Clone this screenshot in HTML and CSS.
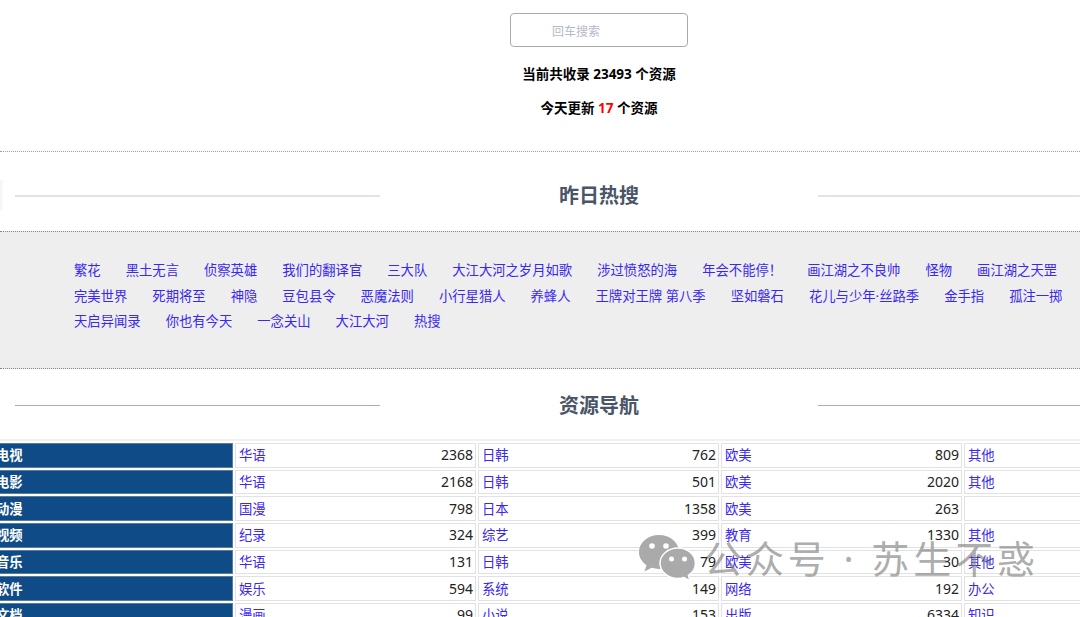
FILE: index.html
```html
<!DOCTYPE html>
<html lang="zh-CN">
<head>
<meta charset="utf-8">
<title>资源导航</title>
<link rel="stylesheet" href="styles.css">
</head>
<body>
<div class="page">
  <section class="top">
    <input class="search" type="text" placeholder="回车搜索">
    <p class="stat">当前共收录 23493 个资源</p>
    <p class="stat">今天更新 <span class="red">17</span> 个资源</p>
  </section>
  <div class="heading hot-heading"><i></i><h2>昨日热搜</h2><i></i></div>
  <nav class="hot">
    <a href="#">繁花</a><a href="#">黑土无言</a><a href="#">侦察英雄</a><a href="#">我们的翻译官</a><a href="#">三大队</a><a href="#">大江大河之岁月如歌</a><a href="#">涉过愤怒的海</a><a href="#">年会不能停！</a><a href="#">画江湖之不良帅</a><a href="#">怪物</a><a href="#">画江湖之天罡</a>
    <a href="#">完美世界</a><a href="#">死期将至</a><a href="#">神隐</a><a href="#">豆包县令</a><a href="#">恶魔法则</a><a href="#">小行星猎人</a><a href="#">养蜂人</a><a href="#">王牌对王牌 第八季</a><a href="#">坚如磐石</a><a href="#">花儿与少年·丝路季</a><a href="#">金手指</a><a href="#">孤注一掷</a>
    <a href="#">天启异闻录</a><a href="#">你也有今天</a><a href="#">一念关山</a><a href="#">大江大河</a><a href="#">热搜</a>
  </nav>
  <div class="heading nav-heading"><i></i><h2>资源导航</h2><i></i></div>
  <table class="res">
    <tr><th>电视</th><td><a href="#">华语</a><b>2368</b></td><td><a href="#">日韩</a><b>762</b></td><td><a href="#">欧美</a><b>809</b></td><td><a href="#">其他</a></td></tr>
    <tr><th>电影</th><td><a href="#">华语</a><b>2168</b></td><td><a href="#">日韩</a><b>501</b></td><td><a href="#">欧美</a><b>2020</b></td><td><a href="#">其他</a></td></tr>
    <tr><th>动漫</th><td><a href="#">国漫</a><b>798</b></td><td><a href="#">日本</a><b>1358</b></td><td><a href="#">欧美</a><b>263</b></td><td></td></tr>
    <tr><th>视频</th><td><a href="#">纪录</a><b>324</b></td><td><a href="#">综艺</a><b>399</b></td><td><a href="#">教育</a><b>1330</b></td><td><a href="#">其他</a></td></tr>
    <tr><th>音乐</th><td><a href="#">华语</a><b>131</b></td><td><a href="#">日韩</a><b>79</b></td><td><a href="#">欧美</a><b>30</b></td><td><a href="#">其他</a></td></tr>
    <tr><th>软件</th><td><a href="#">娱乐</a><b>594</b></td><td><a href="#">系统</a><b>149</b></td><td><a href="#">网络</a><b>192</b></td><td><a href="#">办公</a></td></tr>
    <tr><th>文档</th><td><a href="#">漫画</a><b>99</b></td><td><a href="#">小说</a><b>153</b></td><td><a href="#">出版</a><b>6334</b></td><td><a href="#">知识</a></td></tr>
  </table>
</div>
<div class="mark">
  <svg class="mark-icon" width="58" height="50" viewBox="0 0 58 50">
    <path d="M21 2C10 2 1 9.500 1 19c0 5.500 3 10 7.500 13.200L6.500 38.500l7.200-3.700c2.300.7 4.800 1.100 7.300 1.100 11 0 20-7.600 20-17S32 2 21 2z" fill="#aaa"/>
    <path d="M40 15c-9.900 0-18 6.800-18 15.200S30.100 45.400 40 45.400c2.100 0 4.100-.3 6-.9l6 3.300-1.600-5.400c4.300-2.800 7-7.100 7-12.200C57.400 21.800 49.900 15 40 15z" fill="#aaa" stroke="#fff" stroke-width="1.500"/>
    <circle cx="14" cy="13" r="2.800" fill="#fff"/><circle cx="28" cy="13" r="2.800" fill="#fff"/>
    <circle cx="33.500" cy="26" r="2.500" fill="#fff"/><circle cx="46.500" cy="26" r="2.500" fill="#fff"/>
  </svg>
  <span>公众号 · 苏生不惑</span>
</div>
</body>
</html>
```
FILE: styles.css
```css
* { box-sizing: border-box; }
html, body { margin: 0; height: 617px; overflow: hidden; background: #fff; }
body { font-family: "Noto Sans", "Noto Sans CJK SC", sans-serif; color: #000; position: relative; }
.page { width: 1080px; }
.top { height: 152px; padding: 13px 0 0 118px; border-bottom: 1px dotted #d98a8a; display: flex; flex-direction: column; align-items: center; }
.search { width: 178px; height: 34px; padding: 0 0 0 41px; border: 1px solid #aaa; border-radius: 4px; font: 12px/32px "Noto Sans CJK SC", sans-serif; outline: none; background: #fff; }
.search::placeholder { color: #b4bac6; }
.stat { margin: 18px 0 0; height: 18px; font-size: 13.500px; line-height: 18px; font-weight: 700; white-space: pre; }
.stat + .stat { margin-top: 16px; }
.red { color: #f00; }
.heading { display: flex; align-items: center; padding-left: 15px; position: relative; }
.heading i { display: block; }
.heading i:first-child { width: 365px; }
.heading i:last-child { flex: 1; }
.heading h2 { width: 438px; margin: 0; text-align: center; font-size: 20px; line-height: 28px; font-weight: 700; color: #4a5568; }
.hot-heading { height: 79px; padding-top: 9px; }
.hot-heading i { height: 2px; background: #e2e3e8; }
.hot-heading::before { content: ""; position: absolute; left: 0; top: 28px; width: 4px; height: 30px; background: linear-gradient(90deg, #f3f3f3, #fff); }
.nav-heading { height: 71px; padding-top: 2px; }
.nav-heading i { height: 1px; background: #a8a8c8; }
.hot { height: 138px; padding: 26px 17px 0 74px; background: #eee; border-top: 1px dotted #888; border-bottom: 1px dotted #888; display: flex; flex-wrap: wrap; align-content: flex-start; column-gap: 25px; font-size: 13.33px; line-height: 25.500px; }
.hot a, .res a { color: #3a28f0; text-decoration: none; white-space: pre; }
.res { margin-left: -13px; margin-top: -1px; width: 1213px; table-layout: fixed; border-collapse: separate; border-spacing: 2px; border-top: 2px solid #f1f1f1; }
.res th, .res td { height: 24.700px; padding: 0; border: 1px solid #e2e2e2; font-size: 13.33px; line-height: 20px; }
.res th { width: 244px; background: #0f4c87; border-color: #5a7d9f; color: #fff; text-align: left; padding-left: 6px; font-weight: 700; }
.res td { width: 241px; padding: 0 2px 0 3px; }
.res td::after { content: ""; display: block; clear: both; }
.res a { float: left; }
.res b { float: right; font-weight: 400; font-size: 14px; color: #222; }
.mark { position: absolute; left: 638px; top: 533px; display: flex; align-items: center; gap: 8px; color: rgba(120,120,120,.62); font-size: 38px; line-height: 50px; letter-spacing: 3.900px; white-space: pre; }
.mark-icon { flex: none; }
```
